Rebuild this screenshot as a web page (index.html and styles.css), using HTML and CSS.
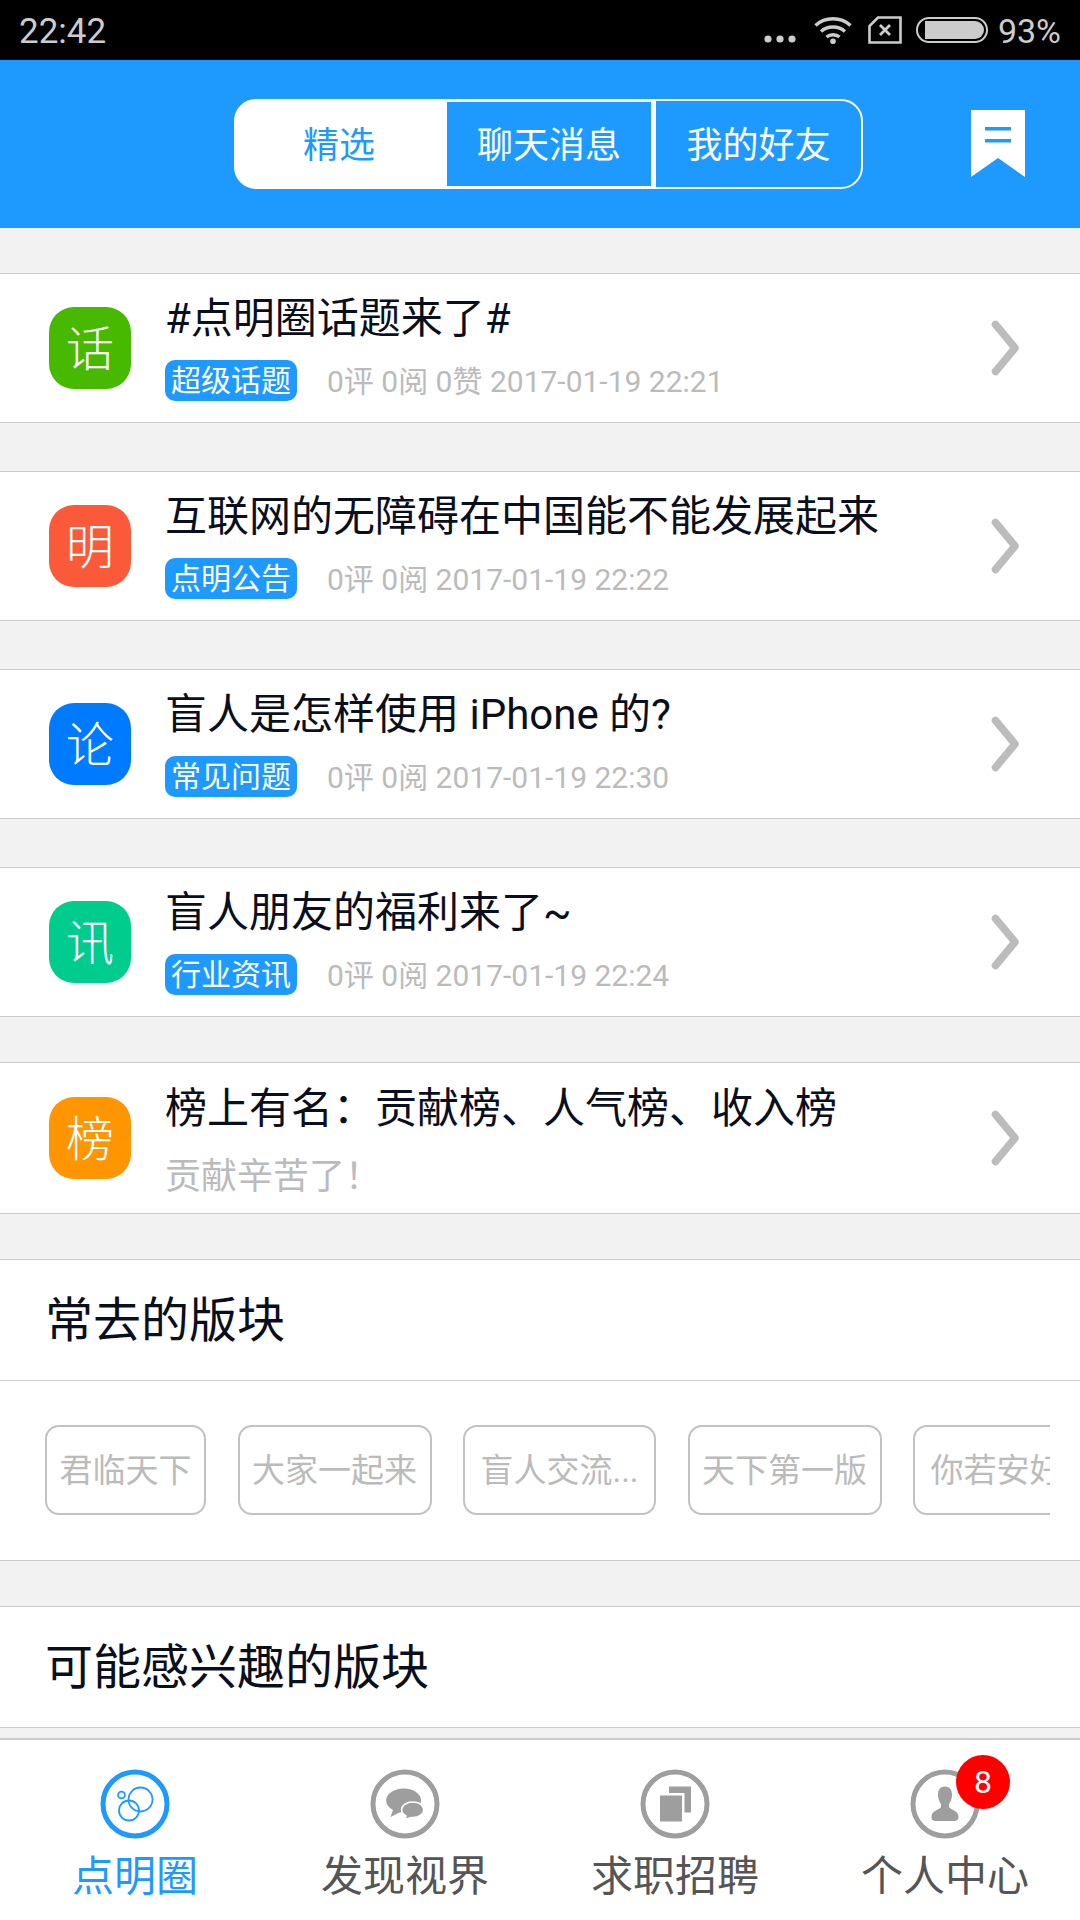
FILE: index.html
```html
<!DOCTYPE html>
<html lang="zh-CN">
<head>
<meta charset="utf-8">
<title>点明圈</title>
<link rel="stylesheet" href="styles.css">
</head>
<body>
<div class="status">
  <span class="time">22:42</span>
  <svg class="st-dots" viewBox="0 0 32 8" width="32" height="8"><circle cx="4" cy="4" r="3.6"/><circle cx="16" cy="4" r="3.6"/><circle cx="28" cy="4" r="3.6"/></svg>
  <svg class="st-wifi" viewBox="0 0 38 28" width="38" height="28"><g fill="none" stroke="#ccc" stroke-width="3.4"><path d="M1.5 9.5C11 .5 27 .5 36.500 9.500"/><path d="M7 15.500C13.500 9.500 24.500 9.500 31 15.500"/><path d="M12.500 21C16 18 22 18 25.500 21"/></g><circle cx="19" cy="25.200" r="2.800" fill="#ccc"/></svg>
  <svg class="st-sim" viewBox="0 0 34 28" width="34" height="28"><path d="M10 1.500H32.500V26.500H1.500V10Z" fill="none" stroke="#ccc" stroke-width="2.600"/><path d="M12 9L22 19M22 9L12 19" stroke="#ccc" stroke-width="2.800"/></svg>
  <svg class="st-bat" viewBox="0 0 72 26" width="72" height="26"><rect x="1" y="1" width="70" height="24" rx="12" fill="none" stroke="#ccc" stroke-width="2"/><path d="M9 4H59A9 9 0 0 1 59 22H9Z" fill="#ccc"/></svg>
  <span class="pct">93%</span>
</div>

<header class="top">
  <div class="seg">
    <div class="seg-item seg-on">精选</div>
    <div class="seg-item seg-mid">聊天消息</div>
    <div class="seg-item seg-end">我的好友</div>
  </div>
  <svg class="mark" viewBox="0 0 54 67" width="54" height="67"><path d="M0 0H54V67L27 48L0 67Z" fill="#fff"/><path d="M14 17H40V20.500H14ZM14 29H40V32.500H14Z" fill="#1e9aff"/></svg>
</header>

<main class="content">
  <a class="row">
    <div class="ava ava-green">话</div>
    <div class="body">
      <div class="title">#点明圈话题来了#</div>
      <div class="sub"><span class="tag">超级话题</span><span class="meta">0评 0阅 0赞 2017-01-19 22:21</span></div>
    </div>
    <svg class="chev" viewBox="0 0 32 56" width="32" height="56"><path d="M6.500 4.500L26 28L6.500 51.500" fill="none" stroke="#bcbcbc" stroke-width="7.500" stroke-linecap="round" stroke-linejoin="round"/></svg>
  </a>
  <a class="row gap-b">
    <div class="ava ava-red">明</div>
    <div class="body">
      <div class="title">互联网的无障碍在中国能不能发展起来</div>
      <div class="sub"><span class="tag">点明公告</span><span class="meta">0评 0阅 2017-01-19 22:22</span></div>
    </div>
    <svg class="chev" viewBox="0 0 32 56" width="32" height="56"><path d="M6.500 4.500L26 28L6.500 51.500" fill="none" stroke="#bcbcbc" stroke-width="7.500" stroke-linecap="round" stroke-linejoin="round"/></svg>
  </a>
  <a class="row gap-b">
    <div class="ava ava-blue">论</div>
    <div class="body">
      <div class="title">盲人是怎样使用 iPhone 的?</div>
      <div class="sub"><span class="tag">常见问题</span><span class="meta">0评 0阅 2017-01-19 22:30</span></div>
    </div>
    <svg class="chev" viewBox="0 0 32 56" width="32" height="56"><path d="M6.500 4.500L26 28L6.500 51.500" fill="none" stroke="#bcbcbc" stroke-width="7.500" stroke-linecap="round" stroke-linejoin="round"/></svg>
  </a>
  <a class="row gap-b">
    <div class="ava ava-teal">讯</div>
    <div class="body">
      <div class="title">盲人朋友的福利来了~</div>
      <div class="sub"><span class="tag">行业资讯</span><span class="meta">0评 0阅 2017-01-19 22:24</span></div>
    </div>
    <svg class="chev" viewBox="0 0 32 56" width="32" height="56"><path d="M6.500 4.500L26 28L6.500 51.500" fill="none" stroke="#bcbcbc" stroke-width="7.500" stroke-linecap="round" stroke-linejoin="round"/></svg>
  </a>
  <a class="row gap-a row-tall">
    <div class="ava ava-orange">榜</div>
    <div class="body">
      <div class="title">榜上有名&#xFF1A;贡献榜、人气榜、收入榜</div>
      <div class="sub"><span class="note">贡献辛苦了&#xFF01;</span></div>
    </div>
    <svg class="chev" viewBox="0 0 32 56" width="32" height="56"><path d="M6.500 4.500L26 28L6.500 51.500" fill="none" stroke="#bcbcbc" stroke-width="7.500" stroke-linecap="round" stroke-linejoin="round"/></svg>
  </a>

  <section class="block gap-a">
    <h2 class="block-head">常去的版块</h2>
    <div class="chips-wrap">
      <div class="chips">
        <span class="chip">君临天下</span>
        <span class="chip">大家一起来</span>
        <span class="chip chip-cut">盲人交流...</span>
        <span class="chip">天下第一版</span>
        <span class="chip chip-cut">你若安好...</span>
      </div>
    </div>
  </section>

  <section class="block gap-a">
    <h2 class="block-head">可能感兴趣的版块</h2>
  </section>
</main>

<nav class="tabs">
  <div class="tab tab-on">
    <svg class="ring" viewBox="0 0 70 70" width="70" height="70"><circle cx="35" cy="35" r="32" fill="none" stroke="#1e9aff" stroke-width="5"/><g fill="none" stroke="#1e9aff" stroke-width="1.800"><circle cx="40.500" cy="30.500" r="12"/><circle cx="29" cy="41.500" r="10"/><circle cx="21.500" cy="26" r="3.400"/></g></svg>
    <span class="tab-label">点明圈</span>
  </div>
  <div class="tab">
    <svg class="ring" viewBox="0 0 70 70" width="70" height="70"><circle cx="35" cy="35" r="32" fill="none" stroke="#9e9e9e" stroke-width="5"/><path d="M20.500 48L23 41A17.500 12 0 1 1 30 43.200Z" fill="#9e9e9e"/><path d="M35 50.500L36 47A11 7.800 0 1 1 41 48.500Z" fill="#9e9e9e" stroke="#fff" stroke-width="1.600"/></svg>
    <span class="tab-label">发现视界</span>
  </div>
  <div class="tab">
    <svg class="ring" viewBox="0 0 70 70" width="70" height="70"><circle cx="35" cy="35" r="32" fill="none" stroke="#9e9e9e" stroke-width="5"/><path d="M29 17.500H51V43.500H44.500V24H29ZM20 26.500H42V52.500H20Z" fill="#9e9e9e"/></svg>
    <span class="tab-label">求职招聘</span>
  </div>
  <div class="tab">
    <svg class="ring" viewBox="0 0 70 70" width="70" height="70"><circle cx="35" cy="35" r="32" fill="none" stroke="#9e9e9e" stroke-width="5"/><path d="M35 17.500C30 17.500 28 21 28 26C28 30 29.500 33 31 35V38C29 41 21.500 42 21.500 47.500C21.500 51 23 52 26 52H44C47 52 48.500 51 48.500 47.500C48.500 42 41 41 39 38V35C40.500 33 42 30 42 26C42 21 40 17.500 35 17.500Z" fill="#9e9e9e"/></svg>
    <span class="tab-label">个人中心</span>
    <span class="badge">8</span>
  </div>
</nav>
</body>
</html>
```

FILE: styles.css
```css
* { box-sizing: border-box; }
html, body { margin: 0; padding: 0; }
body {
  width: 1080px;
  height: 1920px;
  overflow: hidden;
  display: flex;
  flex-direction: column;
  background: #f2f2f2;
  font-family: Roboto, "Noto Sans CJK SC", sans-serif;
}

/* status bar */
.status {
  height: 60px;
  flex: none;
  background: #000;
  color: #ccc;
  display: flex;
  align-items: center;
  font-size: 34px;
  padding: 0 19px;
}
.time { flex: 1; font-size: 35px; margin-top: 2px; }
.st-dots { fill: #ccc; margin: 18px 0 0 0; }
.st-wifi { margin: -1px 0 0 18px; }
.st-sim { margin: -1px 0 0 16px; }
.st-bat { margin: 0 0 0 14px; }
.pct { margin: 1px 0 0 10px; }

/* header */
.top {
  height: 168px;
  flex: none;
  background: #1e9aff;
  display: flex;
  align-items: center;
  padding: 0 55px 0 234px;
}
.seg {
  width: 629px;
  height: 90px;
  display: flex;
  color: #fff;
  font-size: 36px;
}
.seg-item {
  display: flex;
  align-items: center;
  justify-content: center;
  padding-bottom: 4px;
  border: 3px solid #fff;
  font-family: "Noto Sans CJK SC", sans-serif;
}
.seg-on {
  width: 210px;
  background: #fff;
  color: #1e9aff;
  border-radius: 22px 0 0 22px;
}
.seg-mid { width: 210px; }
.seg-end { width: 209px; border-width: 2px; border-radius: 0 22px 22px 0; }
.mark { margin: -1px 0 0 auto; }

/* scrolling content */
.content {
  flex: 1;
  min-height: 0;
  overflow: hidden;
  padding-top: 45px;
}
.gap-a { margin-top: 45px; }
.gap-b { margin-top: 48px; }

.row {
  display: flex;
  align-items: center;
  height: 150px;
  padding: 0 59px 0 49px;
  background: #fff;
  border-top: 1px solid #ccc;
  border-bottom: 1px solid #ccc;
}
.row-tall { height: 152px; }
.ava {
  width: 82px;
  height: 82px;
  flex: none;
  border-radius: 25px;
  display: flex;
  align-items: center;
  justify-content: center;
  padding-bottom: 6px;
  color: #fff;
  font-size: 48px;
  font-family: "Noto Sans CJK SC", sans-serif;
  font-weight: 300;
}
.ava-green { background: #47b900; }
.ava-red { background: #fa5a3a; }
.ava-blue { background: #007aff; }
.ava-teal { background: #00cc8e; }
.ava-orange { background: #ff9500; }

.body { flex: 1; min-width: 0; margin-left: 34px; }
.title {
  color: #0a0f1e;
  font-size: 42px;
  line-height: 50px;
  white-space: nowrap;
  margin-top: -1px;
}
.sub { display: flex; align-items: center; margin-top: 16px; height: 41px; }
.tag {
  width: 132px;
  height: 41px;
  flex: none;
  border-radius: 10px;
  background: #1e9aff;
  color: #fff;
  font-size: 30px;
  line-height: 42px;
  text-align: center;
}
.meta { margin: -3px 0 0 30px; color: #bbb; font-size: 30px; white-space: nowrap; }
.note { margin-top: 4px; color: #bbb; font-size: 36px; white-space: nowrap; }
.chev { flex: none; }

/* sections */
.block { background: #fff; border-top: 1px solid #ccc; border-bottom: 1px solid #ccc; }
.block-head {
  margin: 0;
  height: 120px;
  padding-left: 45px;
  color: #0a0f1e;
  font-size: 48px;
  font-weight: 400;
  line-height: 122px;
}
.chips-wrap {
  border-top: 1px solid #ccc;
  height: 180px;
  padding: 44px 30px 0 45px;
}
.chips {
  display: flex;
  gap: 31.5px;
  overflow: hidden;
}
.chip {
  height: 90px;
  flex: none;
  padding: 0 12.5px;
  border: 2px solid #c2c2c2;
  border-radius: 14px;
  color: #bbb;
  font-size: 33px;
  line-height: 88px;
  text-align: center;
  white-space: nowrap;
}
.chip-cut { width: 193px; padding: 0; }

/* tab bar */
.tabs {
  height: 182px;
  flex: none;
  background: #fff;
  border-top: 2px solid #ccc;
  display: grid;
  grid-template-columns: repeat(4, 270px);
  justify-content: start;
}
.tab {
  position: relative;
  display: flex;
  flex-direction: column;
  align-items: center;
  padding-top: 29px;
  color: #555;
}
.tab-on { color: #1e9aff; }
.ring { flex: none; }
.tab-label { font-size: 42px; line-height: 50px; margin-top: 13px; white-space: nowrap; }
.badge {
  position: absolute;
  top: 15px;
  left: 146px;
  width: 54px;
  height: 54px;
  border-radius: 50%;
  background: #f00;
  color: #fff;
  font-size: 32px;
  line-height: 54px;
  text-align: center;
}
```
